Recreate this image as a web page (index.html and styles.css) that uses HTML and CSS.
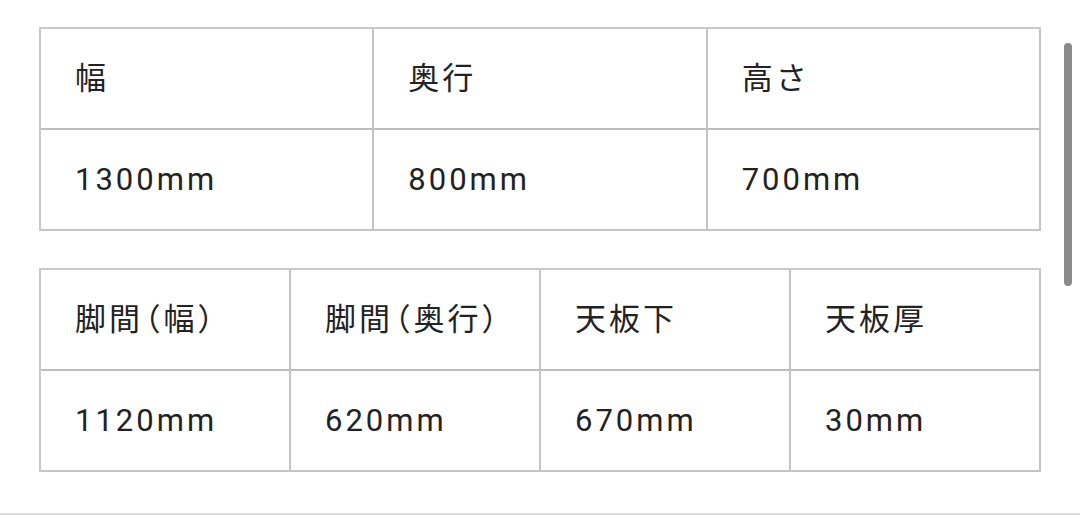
FILE: index.html
```html
<!DOCTYPE html>
<html lang="ja">
<head>
<meta charset="utf-8">
<link rel="stylesheet" href="styles.css">
</head>
<body>
<div class="page">
  <table class="spec spec-3">
    <tr><td>幅</td><td>奥行</td><td>高さ</td></tr>
    <tr><td>1300mm</td><td>800mm</td><td>700mm</td></tr>
  </table>
  <table class="spec spec-4">
    <tr><td>脚間<span class="paren open">（</span>幅<span class="paren">）</span></td><td>脚間<span class="paren open">（</span>奥行<span class="paren">）</span></td><td>天板下</td><td>天板厚</td></tr>
    <tr><td>1120mm</td><td>620mm</td><td>670mm</td><td>30mm</td></tr>
  </table>
</div>
<div class="scrollbar"></div>
<div class="bottom-line"></div>
</body>
</html>
```

FILE: styles.css
```css
html, body {
  margin: 0;
  padding: 0;
  background: #ffffff;
  width: 1080px;
  height: 515px;
  overflow: hidden;
}
body {
  position: relative;
  font-family: Roboto, "Noto Sans CJK JP", sans-serif;
  color: #222222;
}
.page {
  padding: 27px 0 0 39px;
  display: flex;
  flex-direction: column;
  gap: 37px;
}
.spec {
  width: 1002px;
  table-layout: fixed;
  border-collapse: separate;
  border-spacing: 0;
  border-top: 2px solid #c9c9c9;
  border-left: 2px solid #c9c9c9;
}
.spec td {
  border-right: 2px solid #c4c4c4;
  border-bottom: 2px solid #c4c4c4;
  padding: 31px 0 31px 34px;
  line-height: 37px;
  font-size: 31px;
  letter-spacing: 3px;
  white-space: nowrap;
  vertical-align: middle;
}
.spec .paren {
  font-feature-settings: "halt";
  letter-spacing: 3px;
}
.spec .paren.open {
  margin-left: 2px;
}
.spec tr:first-child td {
  border-bottom-color: #bdbdbd;
}
.scrollbar {
  position: absolute;
  left: 1064px;
  top: 43px;
  width: 8px;
  height: 243px;
  border-radius: 4px;
  background: #8a8a8a;
}
.bottom-line {
  position: absolute;
  left: 0;
  right: 0;
  bottom: 0;
  height: 2px;
  background: #dddddd;
}
```
